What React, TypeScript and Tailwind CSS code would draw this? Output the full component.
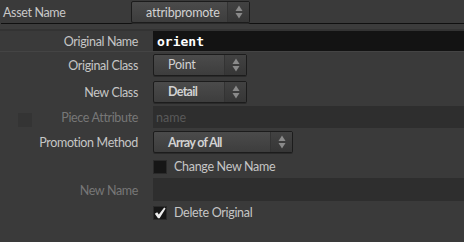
import React from 'react'

const font = { fontFamily: 'Lato, "Noto Sans", sans-serif' }

function Arrows() {
  return (
    <svg width="8" height="14" viewBox="0 0 8 14">
      <path d="M4 0.5 L7.5 6 L0.5 6 Z" fill="#8a8a8a" />
      <path d="M4 13.5 L7.5 8 L0.5 8 Z" fill="#8a8a8a" />
    </svg>
  )
}

function Menu({ label, width, bold }: { label: string; width: string; bold?: boolean }) {
  return (
    <div className={`flex h-[22px] ${width} rounded-[2px] border border-[#1c1c1c] bg-gradient-to-b from-[#4b4b4b] to-[#3d3d3d] shadow-[0_1px_0_#2a2a2a]`}>
      <div
        className={`flex flex-1 items-center pl-[14px] pt-[2px] text-[12.5px] text-[#d2d2d2] ${bold ? 'font-bold tracking-[-0.7px]' : 'tracking-[-0.2px]'}`}
      >
        {label}
      </div>
      <div className="flex w-[22px] items-center justify-center border-l border-[#333] bg-gradient-to-b from-[#424242] to-[#363636]">
        <Arrows />
      </div>
    </div>
  )
}

function Label({ children, dim }: { children: React.ReactNode; dim?: boolean }) {
  return (
    <div className={`w-[139px] shrink-0 pr-[1px] pt-[3px] text-right text-[12.5px] tracking-[-0.35px] ${dim ? 'text-[#777]' : 'text-[#c6c6c6]'}`}>{children}</div>
  )
}

export default function App() {
  return (
    <div className="h-[242px] w-[464px] overflow-hidden bg-[#3a3a3a]" style={font}>
      {/* header */}
      <div className="flex h-[23px] items-start">
        <div className="w-[131px] pl-[3px] pt-[4px] text-[12.5px] tracking-[-0.35px] text-[#c8c8c8]">Asset Name</div>
        <div className="mt-[1px]">
          <Menu label="attribpromote" width="w-[119px] h-[20px]" />
        </div>
      </div>
      <div className="ml-[1px] h-[1px] bg-[#101010]" />
      <div className="h-[5px] bg-[#3c3c3c]" />
      <div className="h-[2px] bg-[#333]" />

      {/* Original Name */}
      <div className="flex h-[20px] items-center gap-[14px]">
        <Label>Original Name</Label>
        <div className="flex h-[20px] flex-1 items-center bg-[#131313] pl-[4px] pt-[1px] text-[13px] font-bold text-white" style={{ fontFamily: '"DejaVu Sans Mono", monospace' }}>
          orient
        </div>
      </div>
      <div className="h-[1px] bg-[#444]" />

      {/* Original Class */}
      <div className="mt-[2px] flex h-[21px] items-center gap-[14px]">
        <Label>Original Class</Label>
        <Menu label="Point" width="w-[94px] h-[21px]" />
      </div>

      {/* New Class */}
      <div className="mt-[6px] flex h-[21px] items-center gap-[14px]">
        <Label>New Class</Label>
        <Menu label="Detail" bold width="w-[94px] h-[21px]" />
      </div>

      {/* Piece Attribute */}
      <div className="mt-[4px] flex h-[22px] items-center">
        <div className="ml-[18px] mt-[5px] h-[14px] w-[14px] shrink-0 bg-[#343434]" />
        <div className="w-[107px] shrink-0 pr-[1px] pt-[3px] text-right text-[12.5px] tracking-[-0.35px] text-[#777]">Piece Attribute</div>
        <div className="ml-[14px] flex h-[22px] flex-1 items-center bg-[#2e2e2e] pl-[3px] pt-[2px] text-[12.5px] text-[#595959]">name</div>
      </div>

      {/* Promotion Method */}
      <div className="mt-[3px] flex h-[22px] items-center gap-[14px]">
        <Label>Promotion Method</Label>
        <Menu label="Array of All" bold width="w-[140px] h-[22px]" />
      </div>

      {/* Change New Name */}
      <div className="mt-[7px] flex h-[14px] items-center pl-[153px]">
        <div className="h-[14px] w-[14px] border border-[#2a2a2a] bg-[#161616]" />
        <div className="ml-[7px] pt-[1px] text-[12.5px] tracking-[-0.3px] text-[#c6c6c6]">Change New Name</div>
      </div>

      {/* New Name */}
      <div className="mt-[4px] flex h-[23px] items-center gap-[14px]">
        <Label dim>New Name</Label>
        <div className="h-[23px] flex-1 bg-[#2e2e2e]" />
      </div>

      {/* Delete Original */}
      <div className="mt-[5px] flex h-[14px] items-center pl-[153px]">
        <div className="flex h-[14px] w-[14px] items-center justify-center border border-[#2a2a2a] bg-[#161616]">
          <svg width="12" height="12" viewBox="0 0 12 12">
            <path d="M0.8 6.8 L3.2 5.2 L4.8 7.4 L10.2 0.6 L11.6 1.6 L5.6 11.2 L4 11.2 Z" fill="#ececec" />
          </svg>
        </div>
        <div className="ml-[7px] pt-[1px] text-[12.5px] tracking-[-0.3px] text-[#c6c6c6]">Delete Original</div>
      </div>
    </div>
  )
}
